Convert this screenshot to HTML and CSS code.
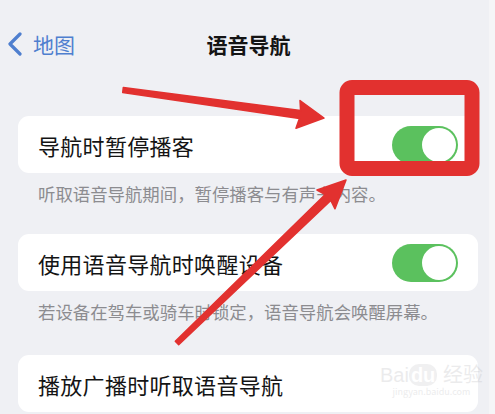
FILE: index.html
```html
<!DOCTYPE html>
<html lang="zh-CN">
<head>
    <meta charset="UTF-8">
    <title>语音导航</title>
    <link rel="stylesheet" href="styles.css">
</head>
<body>
    <div class="screen">
        <header class="navbar">
            <a class="back" href="#">
                <svg class="chevron" width="16" height="24" viewBox="0 0 16 24">
                    <path d="M13 2 L3 12 L13 22" fill="none" stroke="#4f7fcf" stroke-width="3.2" stroke-linecap="round" stroke-linejoin="round"/>
                </svg>
                <span>地图</span>
            </a>
            <h1 class="title">语音导航</h1>
        </header>

        <section class="group first">
            <div class="cell">
                <span class="label">导航时暂停播客</span>
                <span class="toggle on"><span class="knob"></span></span>
            </div>
            <p class="footer">听取语音导航期间，暂停播客与有声书内容。</p>
        </section>

        <section class="group">
            <div class="cell">
                <span class="label">使用语音导航时唤醒设备</span>
                <span class="toggle on"><span class="knob"></span></span>
            </div>
            <p class="footer">若设备在驾车或骑车时锁定，语音导航会唤醒屏幕。</p>
        </section>

        <section class="group last">
            <div class="cell">
                <span class="label">播放广播时听取语音导航</span>
            </div>
        </section>

        <div class="watermark">
            <span class="wm-logo">Bai<b>du</b> 经验</span>
            <span class="wm-url">jingyan.baidu.com</span>
        </div>

        <svg class="marks" width="495" height="414" viewBox="0 0 495 414">
            <rect x="347" y="87.5" width="125" height="81" rx="5" fill="none" stroke="#e2312f" stroke-width="15"/>
            <g fill="#e2312f" stroke="#e2312f" stroke-width="1.5" stroke-linejoin="round">
                <polygon points="123.3,87.5 300.6,110.6 300,100.5 324,118 296,128.3 299.4,118.6 122.7,92.5"/>
                <polygon points="178.7,344.8 330.8,200.4 335,208.8 346,180 317,190 325.2,194.6 175.3,341.2"/>
            </g>
        </svg>
    </div>
</body>
</html>
```

FILE: styles.css
```css
body {
    margin: 0;
    background-color: #eff0f4;
    font-family: "Noto Sans CJK SC", "Noto Sans", sans-serif;
    color: #141414;
}
.screen {
    position: relative;
    width: 495px;
    height: 414px;
    overflow: hidden;
    background: linear-gradient(to left, #f5f5f7 6px, transparent 6px);
}
.navbar {
    position: relative;
    height: 88px;
    display: flex;
    align-items: center;
    justify-content: center;
}
.back {
    position: absolute;
    left: 7px;
    top: 30px;
    display: flex;
    align-items: center;
    gap: 10px;
    color: #4f7fcf;
    text-decoration: none;
    font-size: 21px;
    line-height: 28px;
}
.title {
    margin: 0;
    font-size: 21px;
    font-weight: 700;
    line-height: 28px;
    padding-left: 2px;
}
.group {
    margin: 0 17px 0 18px;
}
.group.first {
    margin-top: 28px;
}
.group + .group {
    margin-top: 29px;
}
.group.last {
    margin-top: 32px;
}
.cell {
    background: #fff;
    border-radius: 11px;
    height: 57px;
    padding: 0 20px 0 20px;
    display: flex;
    align-items: center;
    justify-content: space-between;
}
.label {
    font-size: 22px;
    letter-spacing: 0.3px;
}
.toggle {
    width: 66px;
    height: 38px;
    border-radius: 19px;
    background: #5bc15e;
    position: relative;
}
.knob {
    position: absolute;
    right: 2px;
    top: 2px;
    width: 34px;
    height: 34px;
    border-radius: 50%;
    background: #fff;
}
.footer {
    margin: 0;
    padding: 10px 20px 0 20px;
    font-size: 17.4px;
    line-height: 22px;
    color: #8c8c90;
}
.watermark {
    position: absolute;
    left: 380px;
    top: 364px;
    display: flex;
    flex-direction: column;
    align-items: center;
    opacity: 0.25;
    color: #b4b4b8;
}
.wm-logo {
    font-size: 20px;
    font-family: "Liberation Sans", "Noto Sans CJK SC", sans-serif;
    line-height: 22px;
}
.wm-logo b {
    background: #c4c4c8;
    color: #fff;
    border-radius: 10px;
    padding: 0 2px;
}
.wm-url {
    font-size: 9px;
    line-height: 12px;
}
.marks {
    position: absolute;
    left: 0;
    top: 0;
}
```
